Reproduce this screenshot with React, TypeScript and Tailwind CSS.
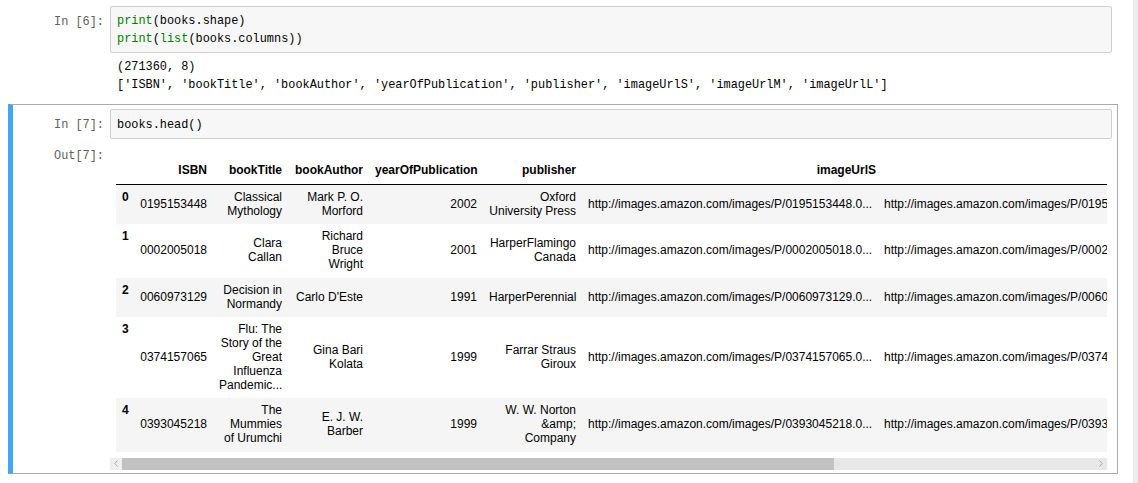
import React from 'react';

interface BookRow {
  isbn: string;
  title: string;
  author: string;
  year: number;
  publisher: string;
}

const books: BookRow[] = [
  { isbn: '0195153448', title: 'Classical\nMythology', author: 'Mark P. O.\nMorford', year: 2002, publisher: 'Oxford\nUniversity Press' },
  { isbn: '0002005018', title: 'Clara\nCallan', author: 'Richard\nBruce\nWright', year: 2001, publisher: 'HarperFlamingo\nCanada' },
  { isbn: '0060973129', title: 'Decision in\nNormandy', author: "Carlo D'Este", year: 1991, publisher: 'HarperPerennial' },
  { isbn: '0374157065', title: 'Flu: The\nStory of the\nGreat\nInfluenza\nPandemic...', author: 'Gina Bari\nKolata', year: 1999, publisher: 'Farrar Straus\nGiroux' },
  { isbn: '0393045218', title: 'The\nMummies\nof Urumchi', author: 'E. J. W.\nBarber', year: 1999, publisher: 'W. W. Norton\n&amp;\nCompany' },
];

const imageUrl = (isbn: string) => `http://images.amazon.com/images/P/${isbn}.0...`;

const mono = "font-['Liberation_Mono',monospace] text-[11.9px] leading-[18px]";

const Prompt: React.FC<{ label?: string; className?: string }> = ({ label, className }) => (
  <div className={`w-[97px] shrink-0 pr-[6px] text-right text-[#616161] ${mono} ${className ?? ''}`}>{label}</div>
);

const InputBox: React.FC<{ children: React.ReactNode }> = ({ children }) => (
  <div className={`flex-1 border border-[#cfcfcf] bg-[#f7f7f7] rounded-[2px] pl-[6px] pt-[5px] pb-[4px] text-black ${mono}`}>
    {children}
  </div>
);

const Builtin: React.FC<{ children: React.ReactNode }> = ({ children }) => (
  <span className="text-[#008000]">{children}</span>
);

const Chevron: React.FC<{ dir: 'left' | 'right' }> = ({ dir }) => (
  <svg width="4" height="7" viewBox="0 0 4 7" className="text-[#a8a8a8]">
    <path d={dir === 'left' ? 'M3.5 0.5 L0.8 3.5 L3.5 6.5' : 'M0.5 0.5 L3.2 3.5 L0.5 6.5'} fill="none" stroke="currentColor" strokeWidth="1" />
  </svg>
);

const BooksTable: React.FC = () => (
  <table className="table-fixed w-[1354px] font-['Liberation_Sans',Arial,sans-serif] text-[12px] leading-[13.8px] text-black">
    <colgroup>
      <col className="w-[18px]" />
      <col className="w-[79px]" />
      <col className="w-[75px]" />
      <col className="w-[81px]" />
      <col className="w-[114px]" />
      <col className="w-[99px]" />
      <col className="w-[296px]" />
      <col className="w-[296px]" />
      <col className="w-[296px]" />
    </colgroup>
    <thead>
      <tr>
        <th className="border-b border-black p-[6px]"></th>
        {['ISBN', 'bookTitle', 'bookAuthor', 'yearOfPublication', 'publisher'].map((h) => (
          <th key={h} className="border-b border-black p-[6px] text-right font-bold align-bottom whitespace-nowrap">{h}</th>
        ))}
        <th className="border-b border-black p-[6px] text-right font-bold align-bottom whitespace-nowrap">
          <span className="inline-block mr-[-4px]">imageUrlS</span>
        </th>
        <th className="border-b border-black p-[6px] text-right font-bold align-bottom whitespace-nowrap">imageUrlM</th>
        <th className="border-b border-black p-[6px] text-right font-bold align-bottom whitespace-nowrap">imageUrlL</th>
      </tr>
    </thead>
    <tbody>
      {books.map((b, i) => (
        <tr key={b.isbn} className={i % 2 === 0 ? 'bg-[#f5f5f5]' : 'bg-white'}>
          <th className="p-[6px] text-left font-bold align-top">{i}</th>
          <td className="p-[6px] text-right align-middle">{b.isbn}</td>
          <td className="p-[6px] text-right align-middle whitespace-pre-line">{b.title}</td>
          <td className="p-[6px] text-right align-middle whitespace-pre-line">{b.author}</td>
          <td className="p-[6px] text-right align-middle">{b.year}</td>
          <td className="p-[6px] text-right align-middle whitespace-pre-line">{b.publisher}</td>
          <td className="p-[6px] text-left align-middle whitespace-nowrap overflow-hidden">{imageUrl(b.isbn)}</td>
          <td className="p-[6px] text-left align-middle whitespace-nowrap overflow-hidden">{imageUrl(b.isbn)}</td>
          <td className="p-[6px] text-left align-middle whitespace-nowrap overflow-hidden">{imageUrl(b.isbn)}</td>
        </tr>
      ))}
    </tbody>
  </table>
);

export default function App() {
  return (
    <div className="w-[1138px] h-[483px] bg-white flex overflow-hidden">
      <div className="w-[1133px] pl-[8px]">
        {/* In [6] */}
        <div className="w-[1110px] border border-transparent border-l-[5px] pt-[5px] pr-[5px] pb-[5px]">
          <div className="flex">
            <Prompt label="In [6]:" className="pt-[7px]" />
            <InputBox>
              <div><Builtin>print</Builtin>(books.shape)</div>
              <div><Builtin>print</Builtin>(<Builtin>list</Builtin>(books.columns))</div>
            </InputBox>
          </div>
          <div className="flex">
            <Prompt />
            <div className={`pl-[7px] pt-[5px] pb-[4px] text-black whitespace-pre ${mono}`}>
              <div>(271360, 8)</div>
              <div>['ISBN', 'bookTitle', 'bookAuthor', 'yearOfPublication', 'publisher', 'imageUrlS', 'imageUrlM', 'imageUrlL']</div>
            </div>
          </div>
        </div>

        {/* In [7], selected */}
        <div className="w-[1110px] border border-[#ababab] border-l-[5px] border-l-[#42a5f5] pt-[4px] pr-[5px] pb-[3px]">
          <div className="flex">
            <Prompt label="In [7]:" className="pt-[7px]" />
            <InputBox>
              <div className="pt-[1px]">books.head()</div>
            </InputBox>
          </div>
          <div className="flex">
            <Prompt label="Out[7]:" className="pt-[8px]" />
            <div className="flex-1 min-w-0 mr-[5px] pt-[19px]">
              <div className="overflow-hidden pl-[6px] pb-[6px]">
                <BooksTable />
              </div>
              <div className="flex h-[12px]">
                <div className="w-[12px] bg-[#efefef] flex items-center justify-center"><Chevron dir="left" /></div>
                <div className="w-[712px] bg-[#c2c2c2]"></div>
                <div className="flex-1 bg-[#e8e8e8]"></div>
                <div className="w-[12px] bg-[#e8e8e8] flex items-center justify-center"><Chevron dir="right" /></div>
              </div>
            </div>
          </div>
        </div>
      </div>
      <div className="flex-1 bg-[#ececec]"></div>
    </div>
  );
}
